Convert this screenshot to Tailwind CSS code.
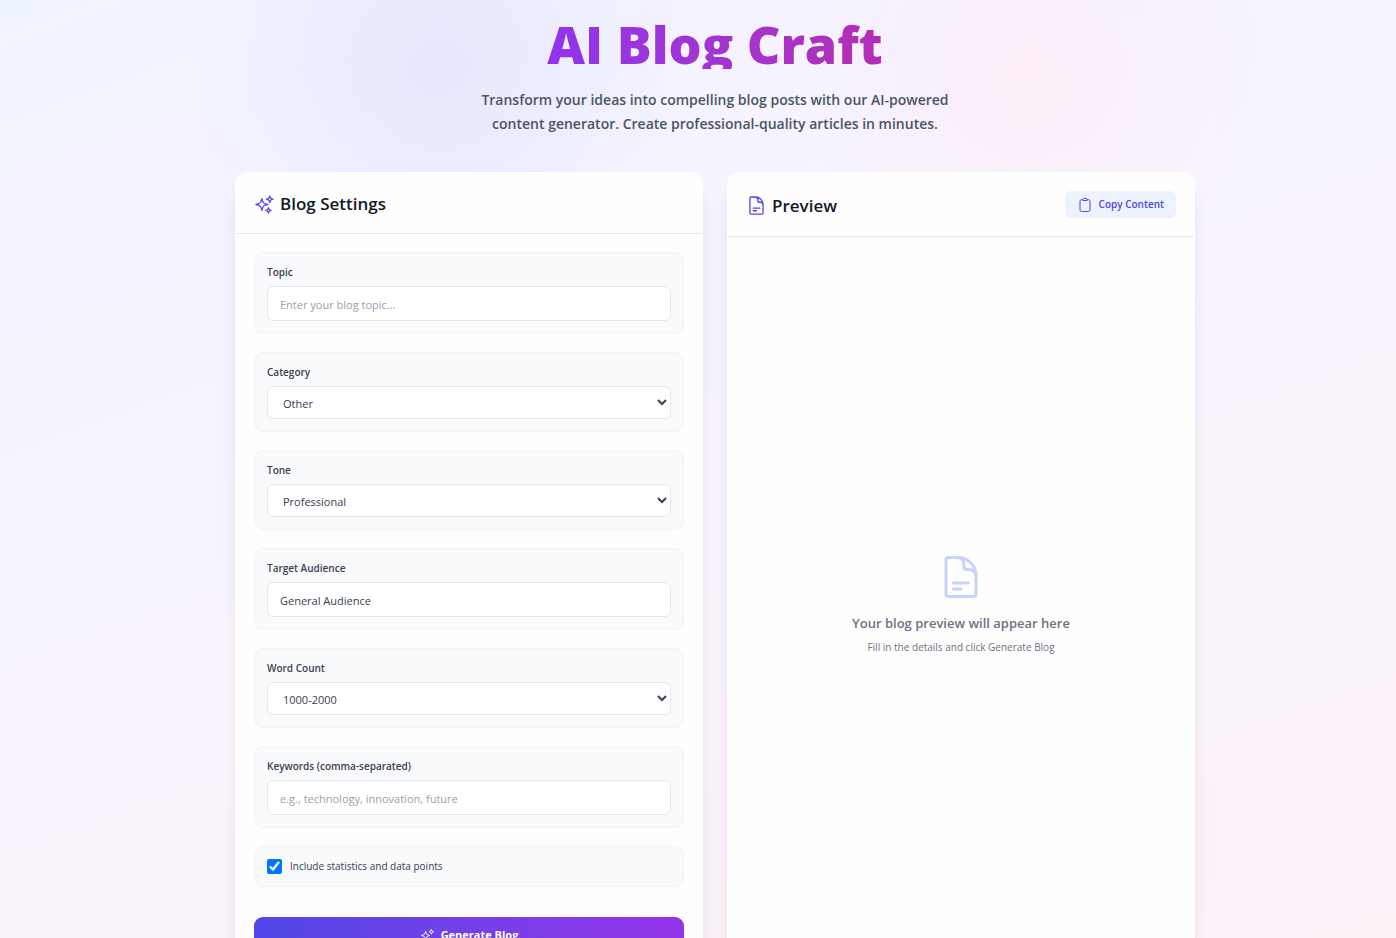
<!DOCTYPE html>
<html lang="en">
<head>
<meta charset="utf-8">
<meta name="viewport" content="width=device-width, initial-scale=1">
<title>AI Blog Craft</title>
<script src="https://cdn.jsdelivr.net/npm/@tailwindcss/browser@4"></script>
</head>
<body class="h-screen overflow-hidden font-['Open_Sans','Noto_Sans',sans-serif] text-[#111827]">
<svg class="hidden" aria-hidden="true">
  <symbol id="sparkles" viewBox="0 0 24 24"><path fill="none" stroke="currentColor" stroke-width="1.5" stroke-linecap="round" stroke-linejoin="round" d="M9.813 15.904L9 18.75l-.813-2.846a4.5 4.5 0 00-3.09-3.09L2.25 12l2.846-.813a4.5 4.5 0 003.09-3.09L9 5.25l.813 2.846a4.5 4.5 0 003.09 3.09L15.75 12l-2.846.813a4.5 4.5 0 00-3.09 3.09zM18.259 8.715L18 9.75l-.259-1.035a3.375 3.375 0 00-2.455-2.456L14.25 6l1.036-.259a3.375 3.375 0 002.455-2.456L18 2.25l.259 1.035a3.375 3.375 0 002.456 2.456L21.75 6l-1.035.259a3.375 3.375 0 00-2.456 2.456zM16.894 20.567L16.5 21.75l-.394-1.183a2.25 2.25 0 00-1.423-1.423L13.5 18.75l1.183-.394a2.25 2.25 0 001.423-1.423l.394-1.183.394 1.183a2.25 2.25 0 001.423 1.423l1.183.394-1.183.394a2.25 2.25 0 00-1.423 1.423z"/></symbol>
  <symbol id="document" viewBox="0 0 24 24"><path fill="none" stroke="currentColor" stroke-width="1.5" stroke-linecap="round" stroke-linejoin="round" d="M19.5 14.25v-2.625a3.375 3.375 0 00-3.375-3.375h-1.5A1.125 1.125 0 0113.5 7.125v-1.5a3.375 3.375 0 00-3.375-3.375H8.25m0 12.75h7.5m-7.5 3H12M10.5 2.25H5.625c-.621 0-1.125.504-1.125 1.125v17.25c0 .621.504 1.125 1.125 1.125h12.75c.621 0 1.125-.504 1.125-1.125V11.25a9 9 0 00-9-9z"/></symbol>
  <symbol id="clipboard" viewBox="0 0 24 24"><path fill="none" stroke="currentColor" stroke-width="1.5" stroke-linecap="round" stroke-linejoin="round" d="M15.666 3.888A2.25 2.25 0 0013.5 2.25h-3c-1.03 0-1.9.693-2.166 1.638m7.332 0c.055.194.084.4.084.612v0a.75.75 0 01-.75.75H9a.75.75 0 01-.75-.75v0c0-.212.03-.418.084-.612m7.332 0c.646.049 1.288.11 1.927.184 1.1.128 1.907 1.077 1.907 2.185V19.5a2.25 2.25 0 01-2.25 2.25H6.75A2.25 2.25 0 014.5 19.5V6.257c0-1.108.806-2.057 1.907-2.185a48.208 48.208 0 011.927-.184"/></symbol>
</svg>
<div class="min-h-screen pl-[34px] pt-[18px] bg-[radial-gradient(circle_at_440px_70px,rgba(224,228,253,0.7),transparent_250px),radial-gradient(circle_at_1030px_70px,rgba(255,228,238,0.45),transparent_230px),linear-gradient(160deg,#eef4ff,#f3f3ff_15%,#faf5ff_50%,#fcf3fa_85%,#fdf2f8)]">
  <div class="mx-auto max-w-[960px]">
    <header class="text-center">
      <h1 class="bg-linear-to-r from-[#9333ea] from-35% to-[#b62cb0] to-70% bg-clip-text text-[52px] leading-[51px] font-extrabold text-transparent">AI Blog Craft</h1>
      <p class="mx-auto mt-[19px] max-w-[504px] text-[14px] leading-6 font-semibold text-[#4b5563]">Transform your ideas into compelling blog posts with our AI-powered content generator. Create professional-quality articles in minutes.</p>
    </header>

    <main class="mt-9 grid grid-cols-2 gap-6">
      <section class="rounded-xl border border-white/50 bg-white/90 shadow-xl">
        <div class="flex h-[61px] items-center gap-[5px] border-b border-gray-200 px-[18px] pt-0.5">
          <svg class="size-[21px] text-[#4f46e5]"><use href="#sparkles"/></svg>
          <h2 class="text-[17px] font-semibold">Blog Settings</h2>
        </div>
        <form class="flex flex-col gap-[18px] p-[18px] text-[#374151]">
          <div class="rounded-[9px] border border-gray-100 bg-gray-50 p-3">
            <label for="topic" class="mb-[6px] block text-[10px] leading-[15px] font-semibold">Topic</label>
            <input id="topic" type="text" placeholder="Enter your blog topic..." class="block h-[35px] w-full rounded-md border border-gray-200 bg-white px-3 pt-0.5 text-[11px] placeholder:text-gray-400">
          </div>
          <div class="rounded-[9px] border border-gray-100 bg-gray-50 p-3">
            <label for="category" class="mb-[6px] block text-[10px] leading-[15px] font-semibold">Category</label>
            <select id="category" class="block h-[33px] w-full rounded-md border border-gray-200 bg-white px-[11px] pt-0.5 text-[11px]"><option>Other</option></select>
          </div>
          <div class="rounded-[9px] border border-gray-100 bg-gray-50 p-3">
            <label for="tone" class="mb-[6px] block text-[10px] leading-[15px] font-semibold">Tone</label>
            <select id="tone" class="block h-[33px] w-full rounded-md border border-gray-200 bg-white px-[11px] pt-0.5 text-[11px]"><option>Professional</option></select>
          </div>
          <div class="rounded-[9px] border border-gray-100 bg-gray-50 p-3">
            <label for="audience" class="mb-[6px] block text-[10px] leading-[15px] font-semibold">Target Audience</label>
            <input id="audience" type="text" value="General Audience" class="block h-[35px] w-full rounded-md border border-gray-200 bg-white px-3 pt-0.5 text-[11px]">
          </div>
          <div class="rounded-[9px] border border-gray-100 bg-gray-50 p-3">
            <label for="words" class="mb-[6px] block text-[10px] leading-[15px] font-semibold">Word Count</label>
            <select id="words" class="block h-[33px] w-full rounded-md border border-gray-200 bg-white px-[11px] pt-0.5 text-[11px]"><option>1000-2000</option></select>
          </div>
          <div class="rounded-[9px] border border-gray-100 bg-gray-50 p-3">
            <label for="keywords" class="mb-[6px] block text-[10px] leading-[15px] font-semibold">Keywords (comma-separated)</label>
            <input id="keywords" type="text" placeholder="e.g., technology, innovation, future" class="block h-[35px] w-full rounded-md border border-gray-200 bg-white px-3 pt-0.5 text-[11px] placeholder:text-gray-400">
          </div>
          <div class="flex items-center gap-2 rounded-[9px] border border-gray-100 bg-gray-50 p-3">
            <input id="stats" type="checkbox" checked class="size-[15px]">
            <label for="stats" class="text-[10px] leading-[15px]">Include statistics and data points</label>
          </div>
          <button type="button" class="mt-3 flex h-9 items-center justify-center gap-1.5 rounded-[9px] bg-linear-to-r from-[#4f46e5] to-[#9333ea] text-[11px] font-bold text-white">
            <svg class="size-[15px]"><use href="#sparkles"/></svg>Generate Blog
          </button>
        </form>
      </section>

      <section class="flex flex-col rounded-xl border border-white/50 bg-white/90 shadow-xl">
        <div class="flex h-16 items-center justify-between border-b border-gray-200 px-[18px]">
          <div class="flex items-center gap-[5px] pt-0.5">
            <svg class="size-[21px] text-[#4f46e5]"><use href="#document"/></svg>
            <h2 class="text-[17px] font-semibold">Preview</h2>
          </div>
          <button type="button" class="flex h-[27px] items-center gap-1.5 rounded-md bg-[#eef2ff] px-3 text-[10px] font-semibold text-[#4f46e5]">
            <svg class="size-4"><use href="#clipboard"/></svg>Copy Content
          </button>
        </div>
        <div class="flex flex-1 flex-col items-center justify-center text-[#6b7280]">
          <svg class="size-12 text-[#c7d2fe]"><use href="#document"/></svg>
          <p class="mt-3 text-[13px] leading-[21px] font-semibold">Your blog preview will appear here</p>
          <p class="mt-1 text-[10px] leading-[18px]">Fill in the details and click Generate Blog</p>
        </div>
      </section>
    </main>
  </div>
</div>
</body>
</html>
